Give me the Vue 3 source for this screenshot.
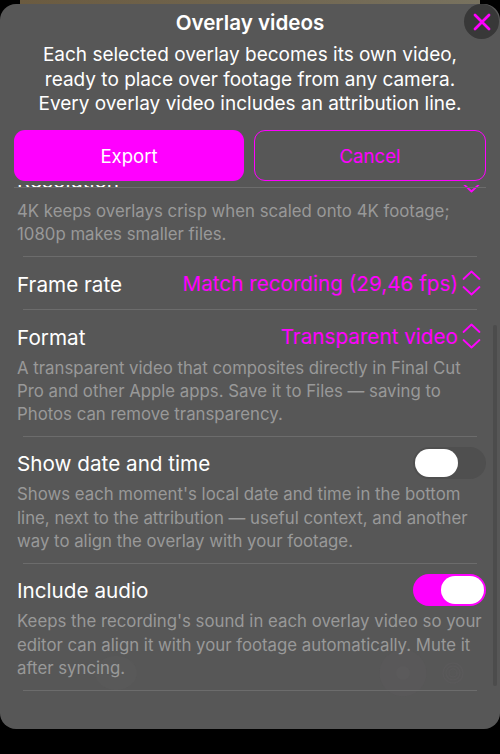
<script setup>
const rows = [
  { label: 'Frame rate', value: 'Match recording (29,46 fps)' },
  {
    label: 'Format',
    value: 'Transparent video',
    note: 'A transparent video that composites directly in Final Cut Pro and other Apple apps. Save it to Files — saving to Photos can remove transparency.',
  },
  {
    label: 'Show date and time',
    toggle: false,
    note: "Shows each moment's local date and time in the bottom line, next to the attribution — useful context, and another way to align the overlay with your footage.",
  },
  {
    label: 'Include audio',
    toggle: true,
    note: "Keeps the recording's sound in each overlay video so your editor can align it with your footage automatically. Mute it after syncing.",
  },
]
</script>

<template>
  <div class="screen">
    <div class="backdrop"></div>
    <section class="sheet">
      <svg class="ghost" viewBox="0 0 500 725" width="500" height="725" aria-hidden="true">
        <ellipse cx="116" cy="669" rx="21" ry="17" fill="#595959" />
        <circle cx="403" cy="669" r="23.5" fill="#595859" />
        <circle cx="403" cy="669" r="7" fill="#5b5a5b" />
        <g fill="none" stroke="#5a595a" stroke-width="1.5">
          <circle cx="453" cy="669" r="4" />
          <circle cx="453" cy="669" r="7" />
          <circle cx="453" cy="669" r="10" />
        </g>
      </svg>
      <button class="close" aria-label="Close">
        <svg viewBox="0 0 20 20" width="20" height="20">
          <path d="M3 3 L17 17 M17 3 L3 17" stroke="#ff00ff" stroke-width="2.8" stroke-linecap="round" fill="none" />
        </svg>
      </button>
      <h1 class="title">Overlay videos</h1>
      <p class="intro">Each selected overlay becomes its own video,<br />ready to place over footage from any camera.<br />Every overlay video includes an attribution line.</p>
      <div class="actions">
        <button class="btn primary">Export</button>
        <button class="btn outline">Cancel</button>
      </div>
      <div class="scroller">
        <div class="topline"></div>
        <div class="scrollbar"></div>
        <div class="content">
          <div class="row">
            <div class="head">
              <span class="label">Resolution</span>
              <span class="picker">
                <svg class="chev" viewBox="0 0 19 26" width="19" height="26">
                  <path d="M1.5 9 L9.5 1.5 L17.5 9 M1.5 17 L9.5 24.5 L17.5 17" stroke="#ff00ff" stroke-width="1.8" stroke-linecap="round" stroke-linejoin="round" fill="none" />
                </svg>
              </span>
            </div>
            <p class="note">4K keeps overlays crisp when scaled onto 4K footage; 1080p makes smaller files.</p>
          </div>
          <template v-for="r in rows" :key="r.label">
            <hr class="rule" />
            <div class="row">
              <div class="head">
                <span class="label">{{ r.label }}</span>
                <span v-if="r.value" class="picker">
                  <span class="value">{{ r.value }}</span>
                  <svg class="chev" viewBox="0 0 19 26" width="19" height="26">
                    <path d="M1.5 9 L9.5 1.5 L17.5 9 M1.5 17 L9.5 24.5 L17.5 17" stroke="#ff00ff" stroke-width="1.8" stroke-linecap="round" stroke-linejoin="round" fill="none" />
                  </svg>
                </span>
                <span v-else class="toggle" :class="{ on: r.toggle }"><span class="knob"></span></span>
              </div>
              <p v-if="r.note" class="note">{{ r.note }}</p>
            </div>
          </template>
          <hr class="rule" />
        </div>
      </div>
    </section>
  </div>
</template>

<style>
html, body { margin: 0; background: #000; }
</style>

<style scoped>
.screen {
  position: relative;
  width: 500px;
  height: 754px;
  overflow: hidden;
  background: #000;
  font-family: Inter, "Liberation Sans", sans-serif;
  padding-top: 4px;
  box-sizing: border-box;
}
.backdrop {
  position: absolute;
  top: 0;
  left: 20px;
  width: 460px;
  height: 12px;
  background: linear-gradient(90deg, #6b5b40, #70654f 50%, #78725f);
}
.sheet {
  position: relative;
  height: 725px;
  background: #575757;
  border-radius: 16px;
  overflow: hidden;
  display: flex;
  flex-direction: column;
  align-items: stretch;
}
.ghost {
  position: absolute;
  top: 0;
  left: 0;
}
.close {
  position: absolute;
  top: 0;
  right: 1px;
  width: 35px;
  height: 35px;
  padding: 0;
  border: 0;
  border-radius: 50%;
  background: #383838;
  display: flex;
  align-items: center;
  justify-content: center;
}
.title {
  position: relative;
  margin: 5px 0 0;
  font-size: 20.6px;
  line-height: 27px;
  font-weight: 600;
  color: #fff;
  text-align: center;
}
.intro {
  position: relative;
  margin: 7px 0 0;
  font-size: 19px;
  line-height: 24.5px;
  color: #fff;
  text-align: center;
}
.actions {
  position: relative;
  display: flex;
  gap: 10px;
  margin: 13px 14px 0;
}
.btn {
  flex: 1 1 0;
  min-width: 0;
  height: 51px;
  padding: 2px 0 0;
  border-radius: 11px;
  font: inherit;
  font-size: 18.6px;
  box-sizing: border-box;
}
.primary {
  background: #ff00ff;
  border: 0;
  color: #fff;
}
.outline {
  background: transparent;
  border: 1.5px solid #ff00ff;
  color: #ff00ff;
}
.scroller {
  position: relative;
  flex: 1;
  overflow: hidden;
  margin-top: 4px;
}
.topline {
  position: absolute;
  top: 2px;
  left: 14px;
  right: 14px;
  height: 1px;
  background: #6c6c6c;
}
.scrollbar {
  position: absolute;
  right: 3px;
  top: 140px;
  width: 4px;
  height: 361px;
  border-radius: 2px;
  background: #4c4c4c;
}
.content {
  margin-top: -31px;
  display: flex;
  flex-direction: column;
}
.row {
  padding: 0 14px 0 17px;
}
.rule {
  height: 1px;
  margin: 0 23px;
  border: 0;
  background: #6c6c6c;
}
.head {
  display: flex;
  align-items: center;
  justify-content: space-between;
  min-height: 52px;
}
.label {
  padding-top: 2px;
  font-size: 20.7px;
  color: #fff;
}
.picker {
  display: flex;
  align-items: center;
  gap: 4px;
  margin-right: 5px;
}
.value {
  font-size: 20.7px;
  color: #ff00ff;
}
.note {
  margin: -5.5px 0 9.5px;
  font-size: 16.8px;
  line-height: 23.3px;
  color: #999;
}
.toggle {
  width: 73px;
  height: 32px;
  border-radius: 16px;
  background: #4f4f4f;
  display: flex;
  align-items: center;
  padding: 2px;
  box-sizing: border-box;
}
.toggle.on {
  background: #ff00ff;
  justify-content: flex-end;
}
.knob {
  width: 43px;
  height: 28px;
  border-radius: 14px;
  background: #fff;
}
</style>
